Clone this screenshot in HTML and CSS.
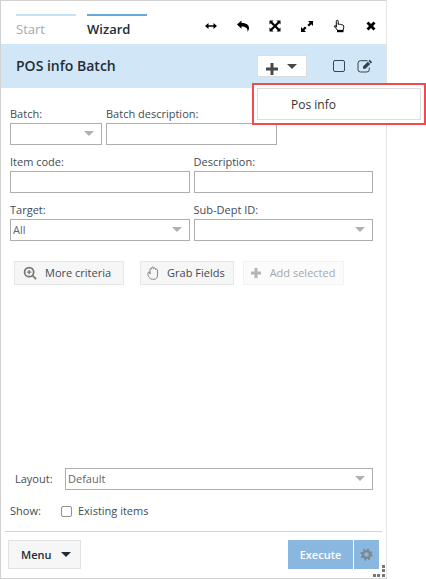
FILE: index.html
```html
<!DOCTYPE html>
<html lang="en">
<head>
<meta charset="utf-8">
<title>POS info Batch</title>
<link rel="stylesheet" href="styles.css">
</head>
<body>
<main class="panel">
  <header class="topbar">
    <nav class="tabs">
      <a class="tab" href="#start">Start</a>
      <a class="tab tab-active" href="#wizard">Wizard</a>
    </nav>
    <div class="tools">
      <button class="tool" type="button" aria-label="Fit width"><svg viewBox="0 0 14 14"><path d="M1 7l3.500-3v2.200h5V4L13 7 9.500 10V7.800h-5V10z"/></svg></button>
      <button class="tool" type="button" aria-label="Back"><svg viewBox="0 0 14 14"><path d="M1 5.500L5.500 1.500v2.400c4.500 0 7.500 1.600 7.500 5.100 0 1.500-.7 2.800-1.500 4 .5-3.400-1.200-5.600-6-5.600v2.400z"/></svg></button>
      <button class="tool" type="button" aria-label="Maximize"><svg viewBox="0 0 14 14"><path d="M1.500 1.500h4L4.300 2.700 7 5.400l2.700-2.700-1.200-1.200h4v4l-1.200-1.200L8.600 7l2.700 2.700 1.200-1.200v4h-4l1.200-1.200L7 8.600l-2.700 2.700 1.200 1.200h-4v-4l1.200 1.200L5.400 7 2.700 4.300 1.500 5.500z"/></svg></button>
      <button class="tool" type="button" aria-label="Expand"><svg viewBox="0 0 14 14"><path d="M8 2h5v5l-1.700-1.700-2.300 2.300-1.600-1.600 2.300-2.300zM6 13H1V8l1.700 1.700L5 7.400 6.600 9l-2.300 2.300z"/></svg></button>
      <button class="tool" type="button" aria-label="Select"><svg viewBox="0 0 14 14"><path class="line" d="M4.300 8.200V2.300c0-1.400 1.900-1.400 1.900 0v3.200c.5-.7 1.500-.6 1.800.2.600-.6 1.500-.4 1.800.4.800-.5 1.900-.1 1.900 1v1.600c0 .9-.6 1.500-.7 2.700H5.500C5 10 3.900 9.500 2.600 7.900 1.900 7 3 6.100 3.800 6.900z"/><path d="M5 11h6.500v2.200H5z"/></svg></button>
      <button class="tool" type="button" aria-label="Close"><svg viewBox="0 0 14 14"><path d="M4.500 2.500L7 5l2.500-2.500 2 2L9 7l2.500 2.500-2 2L7 9l-2.500 2.500-2-2L5 7 2.500 4.500z"/></svg></button>
    </div>
  </header>

  <section class="titlebar">
    <h1 class="title">POS info Batch</h1>
    <div class="add">
      <button class="add-button" type="button" aria-label="Add" aria-expanded="true">
        <svg class="plus" viewBox="0 0 12 12"><path d="M4.500 0h3v4.500H12v3H7.500V12h-3V7.500H0v-3h4.500z"/></svg>
        <span class="caret"></span>
      </button>
      <div class="popup"><button class="popup-item" type="button">Pos info</button></div>
    </div>
    <input class="mark" type="checkbox" aria-label="Select batch">
    <button class="edit" type="button" aria-label="Edit"><svg viewBox="0 0 16 14"><path class="line" d="M10.500 1.700H3.500a2.500 2.500 0 0 0-2.500 2.500v6.300A2.500 2.500 0 0 0 3.500 13h6.300a2.500 2.500 0 0 0 2.500-2.500V8.600"/><path d="M12.700.8l2.400 2.400-1.300 1.300-2.400-2.400zM10.800 2.700l2.400 2.400-4.700 4.700H6V7.500z"/></svg></button>
  </section>

  <form class="form">
    <div class="row row-batch">
      <div class="field"><label for="batch">Batch:</label><div class="select"><select id="batch"><option></option></select></div></div>
      <div class="field"><label for="batch-desc">Batch description:</label><input class="text" id="batch-desc" type="text"></div>
    </div>
    <div class="row">
      <div class="field"><label for="code">Item code:</label><input class="text" id="code" type="text"></div>
      <div class="field"><label for="desc">Description:</label><input class="text" id="desc" type="text"></div>
    </div>
    <div class="row">
      <div class="field"><label for="target">Target:</label><div class="select"><select id="target"><option>All</option></select></div></div>
      <div class="field"><label for="dept">Sub-Dept ID:</label><div class="select"><select id="dept"><option></option></select></div></div>
    </div>
    <div class="actions">
      <button class="action action-more" type="button"><svg class="icon-zoom" viewBox="0 0 16 16"><circle cx="7" cy="7" r="5.200"/><path d="M11 11l4 4"/><path class="thin" d="M4.500 7h5M7 4.500v5"/></svg>More criteria</button>
      <button class="action" type="button"><svg class="icon-hand" viewBox="0 0 12 14"><path d="M3 8V3.200c0-1.200 1.700-1.200 1.700 0V2c0-1.300 1.900-1.300 1.900 0v.7c.1-1.200 1.900-1.100 1.900.2v.8c.2-1 2-.9 2 .4V9c0 2.500-1 4.300-3.500 4.300H5.500C3 13.300 1 10.500 1 8.800V7c0-1.400 2-1.400 2 0z"/></svg>Grab Fields</button>
      <button class="action" type="button" disabled><svg class="icon-add" viewBox="0 0 12 12"><path d="M4.500 1h3v3.500H11v3H7.500V11h-3V7.500H1v-3h3.500z"/></svg>Add selected</button>
    </div>
    <div class="options">
      <div class="option"><label class="layout-label" for="layout">Layout:</label><div class="select"><select id="layout"><option>Default</option></select></div></div>
      <div class="option show"><span class="show-label">Show:</span><input class="box" id="existing" type="checkbox"><label for="existing">Existing items</label></div>
    </div>
  </form>

  <footer class="footer">
    <button class="menu" type="button">Menu <span class="caret"></span></button>
    <div class="run">
      <button class="execute" type="button">Execute</button>
      <button class="settings" type="button" aria-label="Execute settings"><svg viewBox="0 0 14 14"><circle class="teeth" cx="7" cy="7" r="5.500"/><circle class="ring" cx="7" cy="7" r="3.700"/></svg></button>
    </div>
    <svg class="grip" viewBox="0 0 12 12"><path d="M9 0h3v3H9zM9 4h3v3H9zM9 9h3v3H9zM4 9h3v3H4zM0 9h3v3H0z"/></svg>
  </footer>
</main>
</body>
</html>
```
FILE: styles.css
```css
* {
  box-sizing: border-box;
}

body {
  margin: 0;
  background: #fff;
  color: #3f4c52;
  font: 11px/16px "Open Sans", "Noto Sans", sans-serif;
}

button,
input,
select {
  margin: 0;
  padding: 0;
  border: 0;
  border-radius: 0;
  background: none;
  color: inherit;
  font: inherit;
}

svg {
  display: block;
  fill: currentColor;
}

.line {
  fill: none;
  stroke: currentColor;
}

.panel {
  display: flex;
  flex-direction: column;
  min-height: 100vh;
  margin-right: 39px;
  border: 1px solid #d2d2d2;
  border-right-color: #e4e4e4;
}

.topbar {
  display: flex;
  justify-content: space-between;
  height: 43px;
  padding: 13px 8px 0 15px;
}

.tabs {
  display: flex;
  gap: 11px;
}

.tab {
  width: 60px;
  height: 26px;
  border-top: 2px solid #c5e3f6;
  color: #a3a8ab;
  font-size: 13px;
  line-height: 26px;
  text-decoration: none;
}

.tab-active {
  border-color: #66a7de;
  color: #222e34;
  font-weight: 600;
}

.tools {
  display: flex;
  gap: 18px;
  height: 24px;
  align-items: center;
  color: #000;
}

.tool {
  width: 14px;
}

.titlebar {
  display: flex;
  align-items: center;
  height: 44px;
  padding: 0 13px 0 15px;
  background: #d1e6f6;
}

.title {
  flex: 1;
  margin: 0;
  color: #222e34;
  font-size: 14px;
  line-height: 20px;
  font-weight: 600;
}

.add {
  position: relative;
}

.add-button {
  display: flex;
  align-items: center;
  gap: 9px;
  width: 50px;
  height: 22px;
  padding: 0 0 0 8px;
  border: 1px solid #dcdcdc;
  background: #fff;
  color: #484848;
}

.plus {
  width: 12px;
  margin-top: 5px;
}

.caret {
  border: solid transparent;
  border-width: 5px 5px 0;
  border-top-color: currentColor;
}

.popup {
  position: absolute;
  z-index: 1;
  top: 28px;
  left: -5px;
  width: 174px;
  padding: 3px;
  border: 2px solid #f04c50;
  background: #fff;
}

.popup-item {
  width: 100%;
  height: 32px;
  padding: 2px 0 0 33px;
  border: 1px solid #dedede;
  color: #333;
  font-size: 12px;
  text-align: left;
}

.mark,
.box {
  appearance: none;
  border: 1px solid #36474f;
  border-radius: 2px;
}

.mark {
  width: 12px;
  height: 12px;
  margin: 0 12px 0 26px;
}

.edit {
  width: 16px;
  color: #33424a;
}

.form {
  display: flex;
  flex: 1;
  flex-direction: column;
  padding: 18px 13px 0 9px;
}

.row {
  display: grid;
  grid-template-columns: 1fr 1fr;
  gap: 4px;
  margin-bottom: 9px;
}

.row-batch {
  grid-template-columns: 92px 171px;
}

.field label {
  display: block;
  margin-bottom: 1px;
}

.text,
.select select {
  display: block;
  appearance: none;
  width: 100%;
  height: 22px;
  border: 1px solid #adadad;
}

.text {
  padding: 0 3px;
}

.select {
  position: relative;
  flex: 1;
}

.select select {
  padding: 0 20px 0 2px;
  color: #666;
}

.select::after {
  position: absolute;
  top: 8px;
  right: 8px;
  border: solid transparent;
  border-width: 5px 5px 0;
  border-top-color: #b0b0b0;
  content: "";
  pointer-events: none;
}

.actions {
  display: flex;
  gap: 9px;
  margin: 11px 0 24px 4px;
}

.action {
  display: flex;
  align-items: center;
  gap: 8px;
  height: 24px;
  padding: 0 8px 0 6px;
  border: 1px solid #e6e6e6;
  background: #f6f6f6;
  white-space: nowrap;
}

.action:disabled {
  border-color: #f2f2f2;
  background: #fbfbfb;
  color: #a5a9ac;
}

.action-more {
  margin-right: 7px;
  padding: 0 12px 0 8px;
}

.icon-zoom {
  width: 14px;
  fill: none;
  stroke: #767676;
  stroke-width: 2;
}

.thin {
  stroke-width: 1.500;
}

.icon-hand {
  width: 12px;
  fill: none;
  stroke: #858585;
}

.icon-add {
  width: 12px;
  fill: #b5b5b5;
}

.options {
  margin-top: auto;
  padding-bottom: 12px;
}

.option {
  display: flex;
  align-items: center;
}

.layout-label {
  width: 55px;
  padding-left: 5px;
}

.show {
  margin-top: 13px;
}

.show-label {
  width: 51px;
}

.box {
  width: 11px;
  height: 11px;
  margin-right: 6px;
  border-color: #909090;
}

.footer {
  position: relative;
  display: flex;
  justify-content: space-between;
  margin: 0 4px;
  padding: 8px 3px 9px;
  border-top: 1px solid #d2d2d2;
}

.menu {
  display: flex;
  align-items: center;
  gap: 10px;
  width: 73px;
  height: 29px;
  padding-left: 12px;
  border: 1px solid #e2e2e2;
  background: #f7f6f7;
  color: #222e34;
  font-weight: 600;
}

.run {
  display: flex;
  gap: 1px;
}

.execute,
.settings {
  height: 29px;
  background: #89b7df;
  color: #fff;
  font-weight: 600;
}

.execute {
  width: 65px;
}

.settings {
  width: 25px;
  padding-left: 6px;
}

.settings svg {
  width: 13px;
  fill: none;
  stroke: #7d8790;
}

.teeth {
  stroke-width: 2;
  stroke-dasharray: 2.160;
}

.ring {
  stroke-width: 2.500;
}

.grip {
  position: absolute;
  right: -3px;
  bottom: 1px;
  width: 12px;
  color: #777;
}
```
